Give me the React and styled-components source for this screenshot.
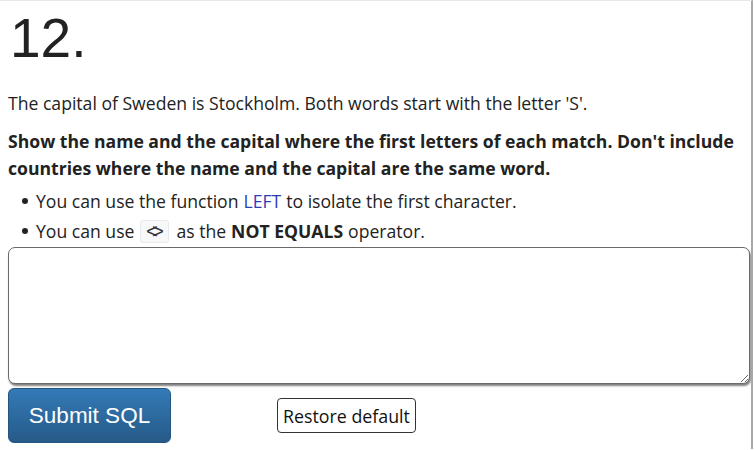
import React from "react";
import styled, { createGlobalStyle } from "styled-components";

const Global = createGlobalStyle`
  html, body { margin: 0; padding: 0; background: #fff; }
  body { font-family: "Open Sans", "Noto Sans", sans-serif; color: #222; }
`;

const Frame = styled.div`
  width: 753px;
  height: 449px;
  border-top: 1px solid #e8e8e8;
  border-right: 2px solid #a8a8a8;
  padding-left: 8px;
  box-sizing: border-box;
  overflow: hidden;
`;

const Heading = styled.h1`
  margin: 0;
  padding: 6px 0 0 2px;
  font-family: "Liberation Sans", Arial, sans-serif;
  font-weight: 400;
  font-size: 55px;
  line-height: 62px;
  color: #222;
`;

const Para = styled.p`
  margin: ${p => p.$mt || 0}px 0 0;
  font-size: 17.6px;
  line-height: ${p => p.$lh || 27}px;
  font-weight: ${p => (p.$bold ? 700 : 400)};
  color: #222;
`;

const List = styled.ul`
  margin: 4px 0 0;
  padding: 0 0 0 14px;
  list-style: none;
`;

const Item = styled.li`
  display: flex;
  align-items: center;
  height: 30px;
  font-size: 17.6px;
  &::before {
    content: "";
    width: 6px;
    height: 6px;
    border-radius: 50%;
    background: #222;
    margin-right: 8px;
    flex: none;
  }
`;

const Link = styled.span`
  color: #2b3fb5;
  margin: 0 5px;
`;

const Code = styled.span`
  display: inline-flex;
  align-items: center;
  justify-content: center;
  width: 29px;
  height: 23px;
  margin: 0 7px 0 6px;
  background: #f6f8fa;
  border: 1px solid #e8eaee;
  border-radius: 3px;
  box-sizing: border-box;
  font-family: "Liberation Mono", monospace;
  font-size: 20px;
  line-height: 1;
  letter-spacing: -6px;
  padding: 4px 6px 0 0;
  color: #333;
`;

const Bold = styled.b`
  margin: 0 5px;
`;

const Editor = styled.textarea`
  display: block;
  margin: 1px 0 0;
  width: 742px;
  height: 137px;
  box-sizing: border-box;
  border: 1px solid #6a6a6a;
  border-radius: 7px;
  box-shadow: 1px 2px 2px rgba(0, 0, 0, 0.5);
  outline: none;
  resize: both;
  font-family: "Liberation Mono", monospace;
`;

const Buttons = styled.div`
  display: flex;
  align-items: center;
  margin-top: 4px;
  gap: 106px;
`;

const Submit = styled.button`
  width: 163px;
  height: 55px;
  border: 1px solid #245580;
  border-radius: 6px;
  background: linear-gradient(#337ab7, #265a88);
  color: #fff;
  font-family: "Liberation Sans", Arial, sans-serif;
  font-size: 22.5px;
  padding: 0;
`;

const Restore = styled.button`
  width: 139px;
  height: 35px;
  border: 1px solid #333;
  border-radius: 4px;
  background: #fff;
  color: #111;
  font-family: "Open Sans", "Noto Sans", sans-serif;
  font-size: 17.8px;
  padding: 0;
`;

export default function App() {
  return (
    <>
      <Global />
      <Frame>
        <Heading>12.</Heading>
        <Para $mt={21}>
          The capital of Sweden is Stockholm. Both words start with the letter 'S'.
        </Para>
        <Para $bold $mt={11}>
          Show the name and the capital where the first letters of each match. Don't include
          countries where the name and the capital are the same word.
        </Para>
        <List>
          <Item>
            You can use the function<Link>LEFT</Link>to isolate the first character.
          </Item>
          <Item>
            You can use<Code>&lt;&gt;</Code>as the<Bold>NOT EQUALS</Bold>operator.
          </Item>
        </List>
        <Editor />
        <Buttons>
          <Submit>Submit SQL</Submit>
          <Restore>Restore default</Restore>
        </Buttons>
      </Frame>
    </>
  );
}
